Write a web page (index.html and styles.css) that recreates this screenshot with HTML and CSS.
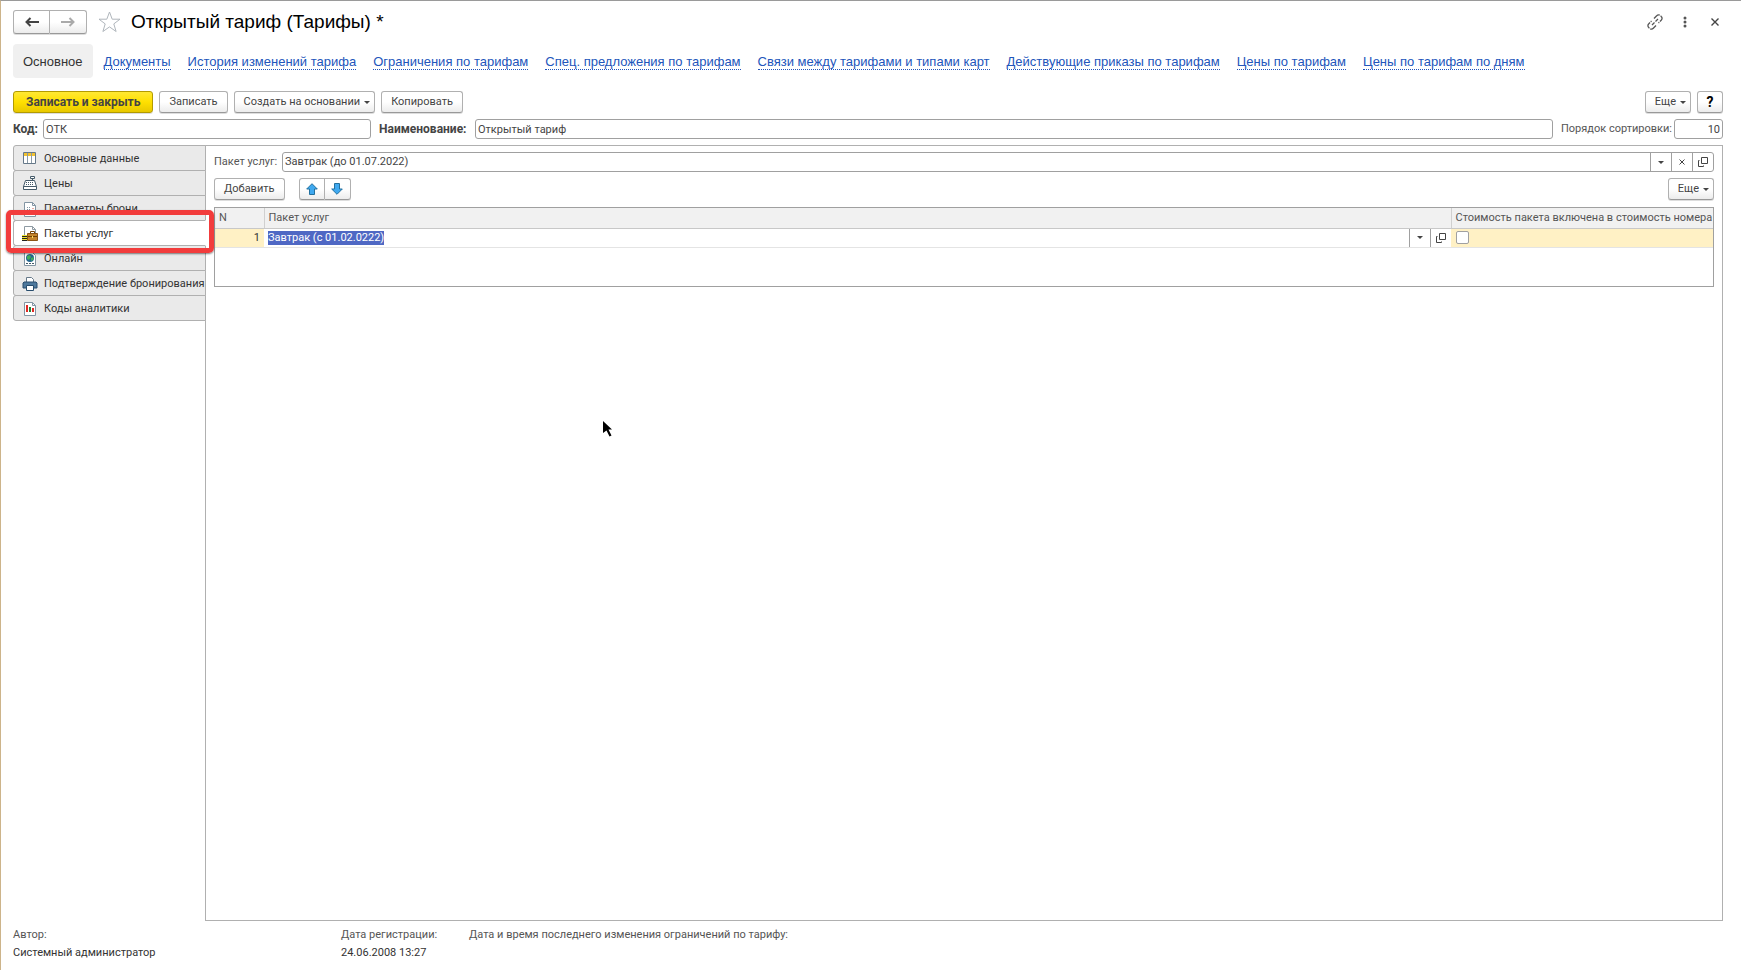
FILE: index.html
```
<!DOCTYPE html>
<html lang="ru">
<head>
    <meta charset="UTF-8">
    <meta name="viewport" content="width=device-width, initial-scale=1.0">
    <title>Открытый тариф (Тарифы) *</title>
    <link rel="stylesheet" href="styles.css">
</head>
<body>
    <!-- Title bar -->
    <header class="titlebar">
        <div class="btn-group history">
            <button type="button" class="btn" aria-label="Назад">
                <svg width="14" height="10" viewBox="0 0 14 10"><path d="M5.500 1L1.500 5l4 4M1.500 5H14" fill="none" stroke="#444" stroke-width="2"/></svg>
            </button>
            <button type="button" class="btn" aria-label="Вперед">
                <svg width="14" height="10" viewBox="0 0 14 10"><path d="M8.500 1l4 4-4 4M12.500 5H0" fill="none" stroke="#aaa" stroke-width="2"/></svg>
            </button>
        </div>
        <button type="button" class="star" aria-label="В избранное">
            <svg width="23" height="22" viewBox="0 0 23 22"><path d="M11.500 1l2.700 7.200h7.800l-6.200 4.700 2.300 7.600-6.600-4.600-6.600 4.600 2.300-7.600L1 8.200h7.800z" fill="#fff" stroke="#b0b6bc"/></svg>
        </button>
        <h1>Открытый тариф (Тарифы) *</h1>
        <div class="window-tools">
            <button type="button" aria-label="Получить ссылку">
                <svg width="16" height="16" viewBox="0 0 16 16" fill="none" stroke="#555" stroke-width="1.300"><path d="M7 4.500l2.700-2.700a2.600 2.600 0 0 1 3.900 0l.6.6a2.600 2.600 0 0 1 0 3.900L11.500 9M9 11.500l-2.700 2.700a2.600 2.600 0 0 1-3.900 0l-.6-.6a2.600 2.600 0 0 1 0-3.900L4.500 7" stroke-dasharray="7 1"/><path d="M5 11l2.500-2.500M8.500 7.500L11 5"/></svg>
            </button>
            <button type="button" aria-label="Меню">
                <svg width="4" height="12" viewBox="0 0 4 12" fill="#555"><circle cx="2" cy="2" r="1.500"/><circle cx="2" cy="6" r="1.500"/><circle cx="2" cy="10" r="1.500"/></svg>
            </button>
            <button type="button" aria-label="Закрыть">
                <svg width="8" height="8" viewBox="0 0 8 8"><path d="M.5.5l7 7M7.500.5l-7 7" stroke="#444" stroke-width="1.400"/></svg>
            </button>
        </div>
    </header>

    <!-- Form navigation -->
    <nav class="form-nav">
        <span class="current">Основное</span>
        <a href="#">Документы</a>
        <a href="#">История изменений тарифа</a>
        <a href="#">Ограничения по тарифам</a>
        <a href="#">Спец. предложения по тарифам</a>
        <a href="#">Связи между тарифами и типами карт</a>
        <a href="#">Действующие приказы по тарифам</a>
        <a href="#">Цены по тарифам</a>
        <a href="#">Цены по тарифам по дням</a>
    </nav>

    <!-- Commands -->
    <div class="toolbar">
        <button type="button" class="btn primary">Записать и закрыть</button>
        <button type="button" class="btn">Записать</button>
        <button type="button" class="btn menu">Создать на основании<i class="caret"></i></button>
        <button type="button" class="btn">Копировать</button>
        <button type="button" class="btn menu push">Еще<i class="caret"></i></button>
        <button type="button" class="btn help">?</button>
    </div>

    <!-- Main fields -->
    <div class="fields">
        <label for="code" class="required label-code">Код:</label>
        <input type="text" id="code" class="field field-code" value="ОТК">
        <label for="name" class="required label-name">Наименование:</label>
        <input type="text" id="name" class="field field-name" value="Открытый тариф">
        <label for="order" class="label-order">Порядок сортировки:</label>
        <input type="text" id="order" class="field field-order" value="10">
    </div>

    <main class="content">
        <div class="tabs" role="tablist">
            <button type="button" class="tab" role="tab">
                <svg width="16" height="16" viewBox="0 0 16 16"><path d="M1.500 1.500h12v11h-12z" fill="#fff" stroke="#657889"/><path d="M5.500 2v10M9.500 2v10" stroke="#8a9aa6"/><path d="M2 2h3v3H2zM6 2h3v3H6zM10 2h3v3h-3z" fill="#f2c230"/></svg>
                Основные данные
            </button>
            <button type="button" class="tab" role="tab">
                <svg width="16" height="16" viewBox="0 0 16 16" fill="#fff" stroke="#455a68"><path d="M8.500.5h4v2h-4zM10.500 2.500v2M3.500 4.500h9l2 6h-13zM1.500 10.500h13v3h-13z"/><path d="M4 6.500h8M4 8.500h8" stroke-dasharray="1 1"/></svg>
                Цены
            </button>
            <button type="button" class="tab" role="tab">
                <svg width="16" height="16" viewBox="0 0 16 16"><path d="M2.500 1.500h8l3 3v11h-11z" fill="#fff" stroke="#8295a3"/><path d="M10.500 1.500v3h3" fill="none" stroke="#8295a3"/><path d="M5 6.500h4M5 8.500h4M5 10.500h4" stroke="#8295a3" stroke-dasharray="1 1"/><path d="M11 7v1M11 10v1" stroke="#df5545"/></svg>
                Параметры брони
            </button>
            <button type="button" class="tab active" role="tab" aria-selected="true">
                <svg width="16" height="16" viewBox="0 0 16 16"><path d="M2.500 10V.5h8l3 3V8" fill="#fff" stroke="#8e9aa3"/><path d="M10.500.5v3h3" fill="none" stroke="#8e9aa3"/><path d="M5.500 7.500h10v7h-10z" fill="#c4842c" stroke="#8a5314"/><path d="M8.500 7V5.500h4V7M6 10.500h9" fill="none" stroke="#704000"/><path d="M10 10h1v2h-1z" fill="#ffdc58"/><path d="M0 10.500h5M0 12.500h5M0 14.500h5" stroke="#222"/><path d="M0 9.500h5M0 11.500h5M0 13.500h5" stroke="#efe42e"/></svg>
                Пакеты услуг
                <span class="highlight"></span>
            </button>
            <button type="button" class="tab" role="tab">
                <svg width="16" height="16" viewBox="0 0 16 16"><path d="M2.500 1.500h8l3 3v10h-11z" fill="#fff" stroke="#8295a3"/><circle cx="8" cy="7" r="4" fill="#24658e"/><path d="M5 5l3-1 1 2-2 3-2-1zM9 7l3-1-1 3-2 1z" fill="#3fae5a"/><path d="M4 12.500h8" stroke="#455a68" stroke-dasharray="2 1"/></svg>
                Онлайн
            </button>
            <button type="button" class="tab" role="tab">
                <svg width="16" height="16" viewBox="0 0 16 16"><path d="M4.500 6V1.500h5l2 2V6" fill="#fff" stroke="#657889"/><path d="M2 6h12l1 1v5H1V7z" fill="#4e799d" stroke="#284d6d"/><path d="M4.500 9.500h7v5h-7z" fill="#fff" stroke="#284d6d"/></svg>
                Подтверждение бронирования
            </button>
            <button type="button" class="tab" role="tab">
                <svg width="16" height="16" viewBox="0 0 16 16"><path d="M2.500 1.500h8l3 3v10h-11z" fill="#fff" stroke="#8295a3"/><path d="M10.500 1.500v3h3" fill="none" stroke="#8295a3"/><path d="M4 4h2v7H4z" fill="#e02824"/><path d="M7 6h2v5H7z" fill="#23823b"/><path d="M10 7h2v4h-2z" fill="#e02824"/></svg>
                Коды аналитики
            </button>
        </div>

        <section class="panel">
            <div class="package-row">
                <label for="package">Пакет услуг:</label>
                <div class="combo">
                    <input type="text" id="package" value="Завтрак (до 01.07.2022)">
                    <button type="button" aria-label="Выбрать из списка"><i class="caret"></i></button>
                    <button type="button" aria-label="Очистить"><svg width="6" height="6" viewBox="0 0 6 6"><path d="M.5.5l5 5M5.500.5l-5 5" stroke="#444"/></svg></button>
                    <button type="button" aria-label="Открыть"><svg width="10" height="10" viewBox="0 0 10 10" fill="none" stroke="#444"><path d="M3.500.5h6v6h-6zM1.500 3.500h-1v6h5v-1"/></svg></button>
                </div>
            </div>

            <div class="toolbar table-tools">
                <button type="button" class="btn">Добавить</button>
                <div class="btn-group arrows">
                    <button type="button" class="btn" aria-label="Вверх"><svg width="12" height="12" viewBox="0 0 12 12"><path d="M6 .7l5.300 5.300H8.500v5.500h-5V6H.7z" fill="#3fa9f0" stroke="#23709f"/></svg></button>
                    <button type="button" class="btn" aria-label="Вниз"><svg width="12" height="12" viewBox="0 0 12 12"><path d="M6 11.300L.7 6h2.800V.5h5V6h2.800z" fill="#3fa9f0" stroke="#23709f"/></svg></button>
                </div>
                <button type="button" class="btn menu push">Еще<i class="caret"></i></button>
            </div>

            <div class="table-box">
                <table>
                    <thead>
                        <tr>
                            <th class="col-n">N</th>
                            <th>Пакет услуг</th>
                            <th class="col-included">Стоимость пакета включена в стоимость номера</th>
                        </tr>
                    </thead>
                    <tbody>
                        <tr>
                            <td class="col-n">1</td>
                            <td class="editing">
                                <div class="cell-edit">
                                    <span class="selected">Завтрак (с 01.02.0222)</span>
                                    <button type="button" aria-label="Выбрать из списка"><i class="caret"></i></button>
                                    <button type="button" aria-label="Открыть"><svg width="10" height="10" viewBox="0 0 10 10" fill="none" stroke="#444"><path d="M3.500.5h6v6h-6zM1.500 3.500h-1v6h5v-1"/></svg></button>
                                </div>
                            </td>
                            <td class="col-included"><input type="checkbox" aria-label="Стоимость пакета включена в стоимость номера"></td>
                        </tr>
                    </tbody>
                </table>
            </div>
        </section>
    </main>

    <footer class="info">
        <dl class="info-author"><dt>Автор:</dt><dd>Системный администратор</dd></dl>
        <dl class="info-date"><dt>Дата регистрации:</dt><dd>24.06.2008 13:27</dd></dl>
        <dl><dt>Дата и время последнего изменения ограничений по тарифу:</dt></dl>
    </footer>

    <svg class="pointer" width="10" height="17" viewBox="0 0 10 17"><path d="M0 0l9 8.500H5.500l3 6-2 1-3-6L0 12z"/></svg>
</body>
</html>
```
FILE: styles.css
```
* {
    box-sizing: border-box;
}
body {
    margin: 0;
    min-height: 100vh;
    padding: 8px 18px 8px 12px;
    border-top: 1px solid #9a9a9a;
    border-left: 1px solid #cdb48a;
    display: flex;
    flex-direction: column;
    position: relative;
    background: #fff;
    color: #333;
    font-family: Roboto, Arial, sans-serif;
    font-size: 11px;
    line-height: 16px;
}
button, input {
    font: inherit;
    color: #444;
    margin: 0;
}
button {
    display: flex;
    align-items: center;
    justify-content: center;
    padding: 0;
    border: none;
    background: none;
    white-space: nowrap;
}
svg {
    flex-shrink: 0;
}

/* Buttons */
.btn {
    height: 22px;
    padding: 0 9px;
    border: 1px solid #b0b0b0;
    border-bottom-color: #999;
    border-radius: 3px;
    background: linear-gradient(#fff 50%, #ececec);
    box-shadow: 0 1px 0 #ddd;
}
.btn.primary {
    padding: 0 12px;
    border-color: #b39b00;
    background: linear-gradient(#ffe834, #ffe000 50%, #e8c800);
    font-size: 12px;
    font-weight: bold;
}
.btn.menu {
    padding-right: 4px;
    gap: 4px;
}
.btn.help {
    width: 26px;
    padding: 0;
    color: #000;
    font-size: 14px;
    font-weight: bold;
}
.push {
    margin-left: auto;
}
.caret {
    border: 3px solid transparent;
    border-top-color: #444;
    border-bottom: none;
}
.btn-group {
    display: flex;
}
.btn-group .btn {
    padding: 0;
    width: 26px;
}
.btn-group .btn:first-child {
    border-radius: 3px 0 0 3px;
}
.btn-group .btn:last-child {
    border-left: none;
    border-radius: 0 3px 3px 0;
}

/* Title */
.titlebar {
    display: flex;
    align-items: center;
    height: 25px;
}
.history .btn {
    width: 37px;
    height: 24px;
}
.star {
    margin: 0 10px 0 11px;
}
h1 {
    margin: 0;
    color: #000;
    font-family: "Liberation Sans", Arial, sans-serif;
    font-size: 19px;
    font-weight: normal;
    line-height: 24px;
}
.window-tools {
    display: flex;
    align-items: center;
    margin: 0 -7px 0 auto;
}
.window-tools button {
    width: 30px;
}

/* Navigation */
.form-nav {
    display: flex;
    align-items: center;
    gap: 17px;
    margin-top: 10px;
    font-family: "Liberation Sans", Arial, sans-serif;
    font-size: 13px;
    white-space: nowrap;
}
.form-nav .current {
    padding: 10px 10px 8px;
    margin-right: -6px;
    border-radius: 4px;
    background: #f0f0f0;
}
.form-nav a {
    padding-top: 2px;
    color: #2255bb;
    text-decoration: none;
    border-bottom: 1px dotted #2255bb;
    line-height: 14px;
}

.toolbar {
    display: flex;
    gap: 6px;
    margin-top: 13px;
}

/* Fields */
.fields {
    display: flex;
    align-items: center;
    margin-top: 6px;
    color: #555;
    white-space: nowrap;
}
.required {
    color: #444;
    font-size: 12px;
    font-weight: bold;
}
.label-code {
    width: 30px;
}
.label-name {
    width: 96px;
    margin-left: 8px;
}
.label-order {
    width: 113px;
    margin-left: 8px;
}
.field, .combo {
    height: 20px;
    border: 1px solid #a0a0a0;
    border-radius: 3px;
    background: #fff;
}
.field {
    padding: 0 2px;
    min-width: 0;
}
.field-code {
    flex: 0 1 328px;
}
.field-name {
    flex: 1;
}
.field-order {
    width: 49px;
    text-align: right;
}

/* Tabs and page */
.content {
    display: flex;
    flex: 1;
    margin-top: 6px;
}
.tabs {
    width: 193px;
    margin-right: -1px;
}
.tab {
    position: relative;
    width: 100%;
    height: 26px;
    margin-bottom: -1px;
    padding: 1px 0 0 8px;
    gap: 6px;
    justify-content: flex-start;
    border: 1px solid #b0b0b0;
    border-radius: 3px 0 0 3px;
    background: #eaeaea;
    color: #333;
}
.tab.active {
    z-index: 1;
    border-right-color: #fff;
    background: #fff;
}
.highlight {
    position: absolute;
    inset: -11px -9px -8px -8px;
    border: 5px solid #f23c3c;
    border-radius: 5px;
    box-shadow: 0 1px 2px rgba(0, 0, 0, 0.5);
}
.panel {
    flex: 1;
    min-width: 0;
    padding: 6px 8px;
    border: 1px solid #b0b0b0;
}
.package-row {
    display: flex;
    align-items: center;
    color: #555;
    white-space: nowrap;
}
.package-row label {
    width: 68px;
}
.combo {
    display: flex;
    flex: 1;
}
.combo input {
    flex: 1;
    min-width: 0;
    padding: 0 2px;
    border: none;
    background: none;
}
.combo button, .cell-edit button {
    width: 21px;
    border-left: 1px solid #a0a0a0;
}
.table-tools {
    margin-top: 6px;
}
.arrows {
    margin-left: 8px;
}

/* Table */
.table-box {
    height: 80px;
    margin-top: 7px;
    border: 1px solid #a0a0a0;
}
table {
    width: 100%;
    border-collapse: collapse;
    table-layout: fixed;
}
th, td {
    height: 20px;
    padding: 0 4px;
    white-space: nowrap;
}
th {
    padding-top: 1px;
    border-right: 1px solid #d0d0d0;
    border-bottom: 1px solid #c8c8c8;
    background: #f1f1f1;
    color: #555;
    font-weight: normal;
    text-align: left;
}
th:last-child {
    border-right: none;
}
td {
    height: 18px;
    border-bottom: 1px solid #e4e4e4;
    background: #fff1c5;
}
.col-n {
    width: 49px;
}
td.col-n {
    text-align: right;
}
th.col-included {
    width: 262px;
    padding: 1px 0 0 4px;
}
td.col-included {
    padding-left: 5px;
}
td.editing {
    padding: 0 0 0 4px;
    background: #fff;
}
.cell-edit {
    display: flex;
    align-items: center;
    height: 18px;
}
.cell-edit button {
    height: 18px;
}
.selected {
    margin-right: auto;
    line-height: 14px;
    background: #4f68c4;
    color: #fff;
}
td input[type="checkbox"] {
    appearance: none;
    display: block;
    width: 13px;
    height: 13px;
    border: 1px solid #a0a0a0;
    border-radius: 2px;
    background: #fff;
}

/* Footer */
.info {
    display: flex;
    margin-top: 5px;
    color: #555;
    line-height: 18px;
}
.info dl, .info dd {
    margin: 0;
}
.info dd {
    color: #333;
}
.info-author {
    width: 328px;
}
.info-date {
    width: 128px;
}

.pointer {
    position: absolute;
    left: 602px;
    top: 420px;
}
```
